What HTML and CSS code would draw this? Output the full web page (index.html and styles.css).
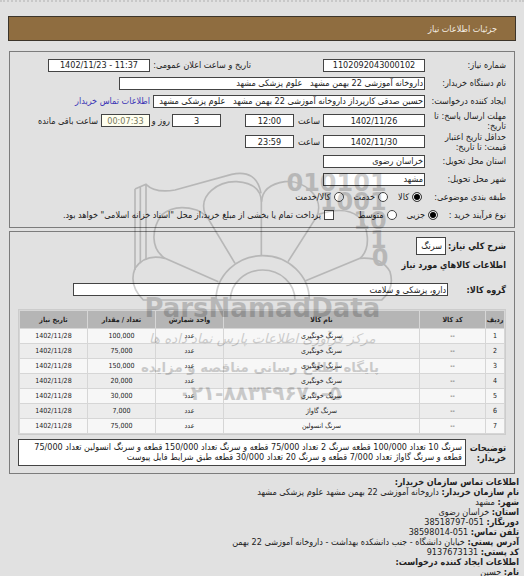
FILE: index.html
```html
<!DOCTYPE html>
<html lang="fa" dir="rtl">
<head>
<meta charset="utf-8">
<title>جزئیات اطلاعات نیاز</title>
<link rel="stylesheet" href="styles.css">
</head>
<body>
<header class="bar">جزئیات اطلاعات نیاز</header>

<main>
<form class="panel need">
  <div class="row">
    <label class="label" for="num">شماره نیاز:</label>
    <input class="box date" id="num" value="1102092043000102" readonly>
    <label class="announce" for="ann">تاریخ و ساعت اعلان عمومی:</label>
    <input class="box date" id="ann" value="1402/11/23 - 11:37" dir="ltr" readonly>
  </div>
  <div class="row">
    <label class="label" for="org">نام دستگاه خریدار:</label>
    <input class="box org" id="org" value="داروخانه آموزشی 22 بهمن مشهد   علوم پزشکی مشهد" readonly>
  </div>
  <div class="row">
    <label class="label" for="creator">ایجاد کننده درخواست:</label>
    <input class="box creator" id="creator" value="حسین صدقی کارپرداز داروخانه آموزشی 22 بهمن مشهد   علوم پزشکی مشهد" readonly>
    <a class="link" href="#contact">اطلاعات تماس خریدار</a>
  </div>
  <div class="row tall">
    <label class="label" for="reply">مهلت ارسال پاسخ: تا تاریخ:</label>
    <input class="box date" id="reply" value="1402/11/26" dir="ltr" readonly>
    <label class="unit" for="replyTime">ساعت</label>
    <input class="box time" id="replyTime" value="12:00" readonly>
    <input class="box time days" id="days" value="3" readonly>
    <label class="and" for="days">روز و</label>
    <input class="box time left" id="left" value="00:07:33" readonly>
    <label class="remain" for="left">ساعت باقی مانده</label>
  </div>
  <div class="row tall">
    <label class="label" for="valid">حداقل تاریخ اعتبار قیمت: تا تاریخ:</label>
    <input class="box date" id="valid" value="1402/11/30" dir="ltr" readonly>
    <label class="unit" for="validTime">ساعت</label>
    <input class="box time" id="validTime" value="23:59" readonly>
  </div>
  <div class="row">
    <label class="label" for="prov">استان محل تحویل:</label>
    <input class="box place" id="prov" value="خراسان رضوی" readonly>
  </div>
  <div class="row">
    <label class="label" for="city">شهر محل تحویل:</label>
    <input class="box place" id="city" value="مشهد" readonly>
  </div>
  <div class="row">
    <span class="label kind">طبقه بندی موضوعی:</span>
    <div class="choices">
      <label><input type="radio" name="kind" checked>کالا</label>
      <label><input type="radio" name="kind">خدمت</label>
      <label><input type="radio" name="kind">کالا/خدمت</label>
    </div>
  </div>
  <div class="row">
    <span class="label short">نوع فرآیند خرید :</span>
    <div class="choices">
      <label><input type="radio" name="proc" checked>جزیی</label>
      <label><input type="radio" name="proc">متوسط</label>
    </div>
    <label class="treasury"><input type="checkbox">پرداخت تمام یا بخشی از مبلغ خرید،از محل "اسناد خزانه اسلامی" خواهد بود.</label>
  </div>
</form>

<section class="panel goods">
  <div class="summary"><label for="desc">شرح کلي نياز:</label><input class="box word" id="desc" value="سرنگ" readonly></div>
  <h2>اطلاعات کالاهاي مورد نياز</h2>
  <div class="group"><label for="grp">گروه کالا:</label><input class="box" id="grp" value="دارو، پزشکی و سلامت" readonly></div>
  <table>
    <colgroup><col class="c-row"><col class="c-code"><col><col class="c-num"><col class="c-num"><col class="c-num"></colgroup>
    <thead><tr><th>ردیف</th><th>کد کالا</th><th>نام کالا</th><th>واحد شمارش</th><th>تعداد / مقدار</th><th>تاریخ نیاز</th></tr></thead>
    <tbody>
      <tr><td>1</td><td>--</td><td>سرنگ خونگیری</td><td>عدد</td><td>100,000</td><td>1402/11/28</td></tr>
      <tr><td>2</td><td>--</td><td>سرنگ خونگیری</td><td>عدد</td><td>75,000</td><td>1402/11/28</td></tr>
      <tr><td>3</td><td>--</td><td>سرنگ خونگیری</td><td>عدد</td><td>150,000</td><td>1402/11/28</td></tr>
      <tr><td>4</td><td>--</td><td>سرنگ خونگیری</td><td>عدد</td><td>20,000</td><td>1402/11/28</td></tr>
      <tr><td>5</td><td>--</td><td>سرنگ خونگیری</td><td>عدد</td><td>30,000</td><td>1402/11/28</td></tr>
      <tr><td>6</td><td>--</td><td>سرنگ گاواژ</td><td>عدد</td><td>7,000</td><td>1402/11/28</td></tr>
      <tr><td>7</td><td>--</td><td>سرنگ انسولین</td><td>عدد</td><td>75,000</td><td>1402/11/28</td></tr>
    </tbody>
  </table>
  <div class="notes">
    <strong>توضیحات خریدار:</strong>
    <p>سرنگ 10 تعداد 100/000 قطعه سرنگ 2 تعداد 75/000 قطعه و سرنگ تعداد 150/000 قطعه و سرنگ انسولین تعداد 75/000<br>قطعه و سرنگ گاواژ تعداد 7/000 قطعه و سرنگ 20 تعداد 30/000 قطعه طبق شرایط فایل پیوست</p>
  </div>
</section>
</main>

<footer class="contact" id="contact">
  <div><b>اطلاعات تماس سازمان خریدار:</b></div>
  <div><b>نام سازمان خریدار:</b> داروخانه آموزشی 22 بهمن مشهد علوم پزشکی مشهد</div>
  <div><b>شهر:</b> مشهد</div>
  <div><b>استان:</b> خراسان رضوی</div>
  <div><b>دورنگار:</b> <bdi dir="ltr">38518797-051</bdi></div>
  <div><b>تلفن تماس:</b> <bdi dir="ltr">38598014-051</bdi></div>
  <div><b>آدرس پستی:</b> خیابان دانشگاه - جنب دانشکده بهداشت - داروخانه آموزشی 22 بهمن</div>
  <div><b>کد پستی:</b> 9137673131</div>
  <div><b>اطلاعات ایجاد کننده درخواست:</b></div>
  <div><b>نام:</b> حسین</div>
</footer>

<svg class="mark" viewBox="0 0 825 735" direction="ltr" aria-hidden="true">
  <g class="lines">
    <path d="M30 72V315M46 65V295M63 58V285M30 72L63 58Q90 85 150 75L320 28Q395 12 408 85"/>
    <path d="M330 295L240 145C220 90 280 48 335 50Q408 55 409 110V270"/>
    <path d="M489 290L575 155C600 100 540 45 480 50Q412 60 410 110"/>
    <path d="M280 350L120 280C75 250 80 190 110 150Q150 115 215 135Q235 143 247 160"/>
    <path d="M540 348L705 280C740 250 730 180 700 155Q660 122 580 148"/>
    <path d="M120 280Q60 265 30 310Q10 360 55 405H770Q810 370 795 320Q770 275 705 280"/>
    <path d="M273 405A140 133 0 0 1 553 405M316 405A97 90 0 0 1 510 405"/>
  </g>
  <g class="bits">
    <text x="785" y="79">010101</text>
    <text x="785" y="136">1001</text>
    <text x="785" y="192">10</text>
    <text x="785" y="248">1</text>
    <text x="790" y="303">0</text>
  </g>
  <g class="words">
    <text class="brand" x="412" y="457">ParsNamadData</text>
    <text class="script" x="412" y="533" direction="rtl">مرکز فرآوری اطلاعات پارس نماد داده ها</text>
    <text class="tag" x="405" y="620" direction="rtl">پایگاه اطلاع رسانی مناقصه و مزایده</text>
    <text class="phone" x="405" y="705">۰۲۱-۸۸۳۴۹۶۷۰-۵</text>
  </g>
</svg>
</body>
</html>
```
FILE: styles.css
```css
* { box-sizing: border-box; }
html { overflow: hidden; }
body {
  position: relative;
  margin: 0;
  padding: 0 8px;
  border-top: 2px dotted #c8c8c8;
  background: #e1e1e1;
  color: #222;
  font: 9px/10px "DejaVu Sans Condensed", "DejaVu Sans", sans-serif;
}
input { margin: 0; font: inherit; color: inherit; }
.bar {
  display: flex;
  align-items: center;
  height: 25px;
  margin: 14px 0 10px;
  padding: 0 18px;
  border: 1px solid #3c352b;
  background: #8f6d40;
  color: #f4eee4;
}
main { padding: 0 1px; }
.panel { margin: 0 0 3px; border: 1px solid #7c7c7c; }
.need { padding: 4px 8px 3px; }
.row { display: flex; align-items: center; height: 18px; }
.row.tall { height: 21px; }
.label { flex: none; width: 81px; padding-left: 4px; }
.label.kind { width: 84px; padding: 0; }
.label.short { width: 68px; padding: 0; white-space: nowrap; }
.box {
  flex: none;
  height: 13px;
  padding: 0 1px;
  border: 1px solid #444;
  border-radius: 0;
  background: #fff;
  line-height: 11px;
}
.date { width: 102px; text-align: center; }
.place { width: 102px; }
.org { width: 306px; }
.creator { width: 272px; }
.time { width: 49px; text-align: center; }
.days { margin-right: 24px; }
.left { background: #fffff0; color: #77775c; }
.announce { width: 101px; margin-right: 72px; white-space: nowrap; }
.link { margin-right: 3px; color: #3b35b5; text-decoration: none; white-space: nowrap; }
.unit { width: 29px; padding-right: 3px; }
.and { width: 22px; padding-right: 2px; white-space: nowrap; }
.remain { padding-right: 3px; white-space: nowrap; }
.choices { display: flex; gap: 10px; }
.choices label, .treasury { display: flex; align-items: center; gap: 3px; white-space: nowrap; }
.treasury { margin-right: 24px; }
input[type="radio"], input[type="checkbox"] {
  appearance: none;
  width: 10px;
  height: 10px;
  border: 1px solid #444;
  background: #fff;
}
input[type="radio"] { border-radius: 50%; }
input[type="radio"]:checked { background: #000; box-shadow: inset 0 0 0 1px #fff; }

.goods { padding: 5px 8px 7px; }
.summary { display: flex; align-items: center; gap: 2px; font-weight: bold; }
.summary .box { width: 30px; height: 18px; padding: 0 3px; font-weight: normal; }
h2 { margin: 5px 0 0; font-size: 9px; line-height: 10px; }
.group { display: flex; align-items: center; justify-content: space-between; margin: 13px 0; padding-left: 55px; font-weight: bold; }
.group .box { width: 375px; font-weight: normal; }
table {
  width: 100%;
  table-layout: fixed;
  border: 1px solid #ccc;
  border-spacing: 1px;
  background: #d6d6d6;
}
.c-row { width: 18px; }
.c-code { width: 65px; }
.c-num { width: 67px; }
th, td { height: 14px; padding: 0; text-align: center; white-space: nowrap; font-size: 7px; }
th { height: 17px; background: #b5b5b5; }
td { background: #f7f7f7; }
tr:nth-child(even) td { background: #ececec; }
.notes { display: flex; gap: 2px; margin-top: 4px; }
.notes strong { width: 38px; padding-top: 4px; }
.notes p { flex: 1; margin: 0; padding: 2px 3px 3px; border: 1px solid #444; background: #fff; white-space: nowrap; }
.contact { margin: 0 -3px; }

.mark {
  position: absolute;
  top: 163px;
  left: 125px;
  width: 275px;
  height: 245px;
  opacity: 0.18;
  pointer-events: none;
}
.lines { fill: none; stroke: #000; stroke-width: 5; }
.bits { font: bold 72px "DejaVu Sans", sans-serif; text-anchor: end; }
.words { text-anchor: middle; }
.brand { font: bold 78px "DejaVu Sans", sans-serif; }
.script { font: italic 40px "DejaVu Sans", sans-serif; }
.tag { font: bold 40px "DejaVu Sans", sans-serif; }
.phone { font: bold 60px "DejaVu Sans", sans-serif; direction: ltr; unicode-bidi: bidi-override; }
```
